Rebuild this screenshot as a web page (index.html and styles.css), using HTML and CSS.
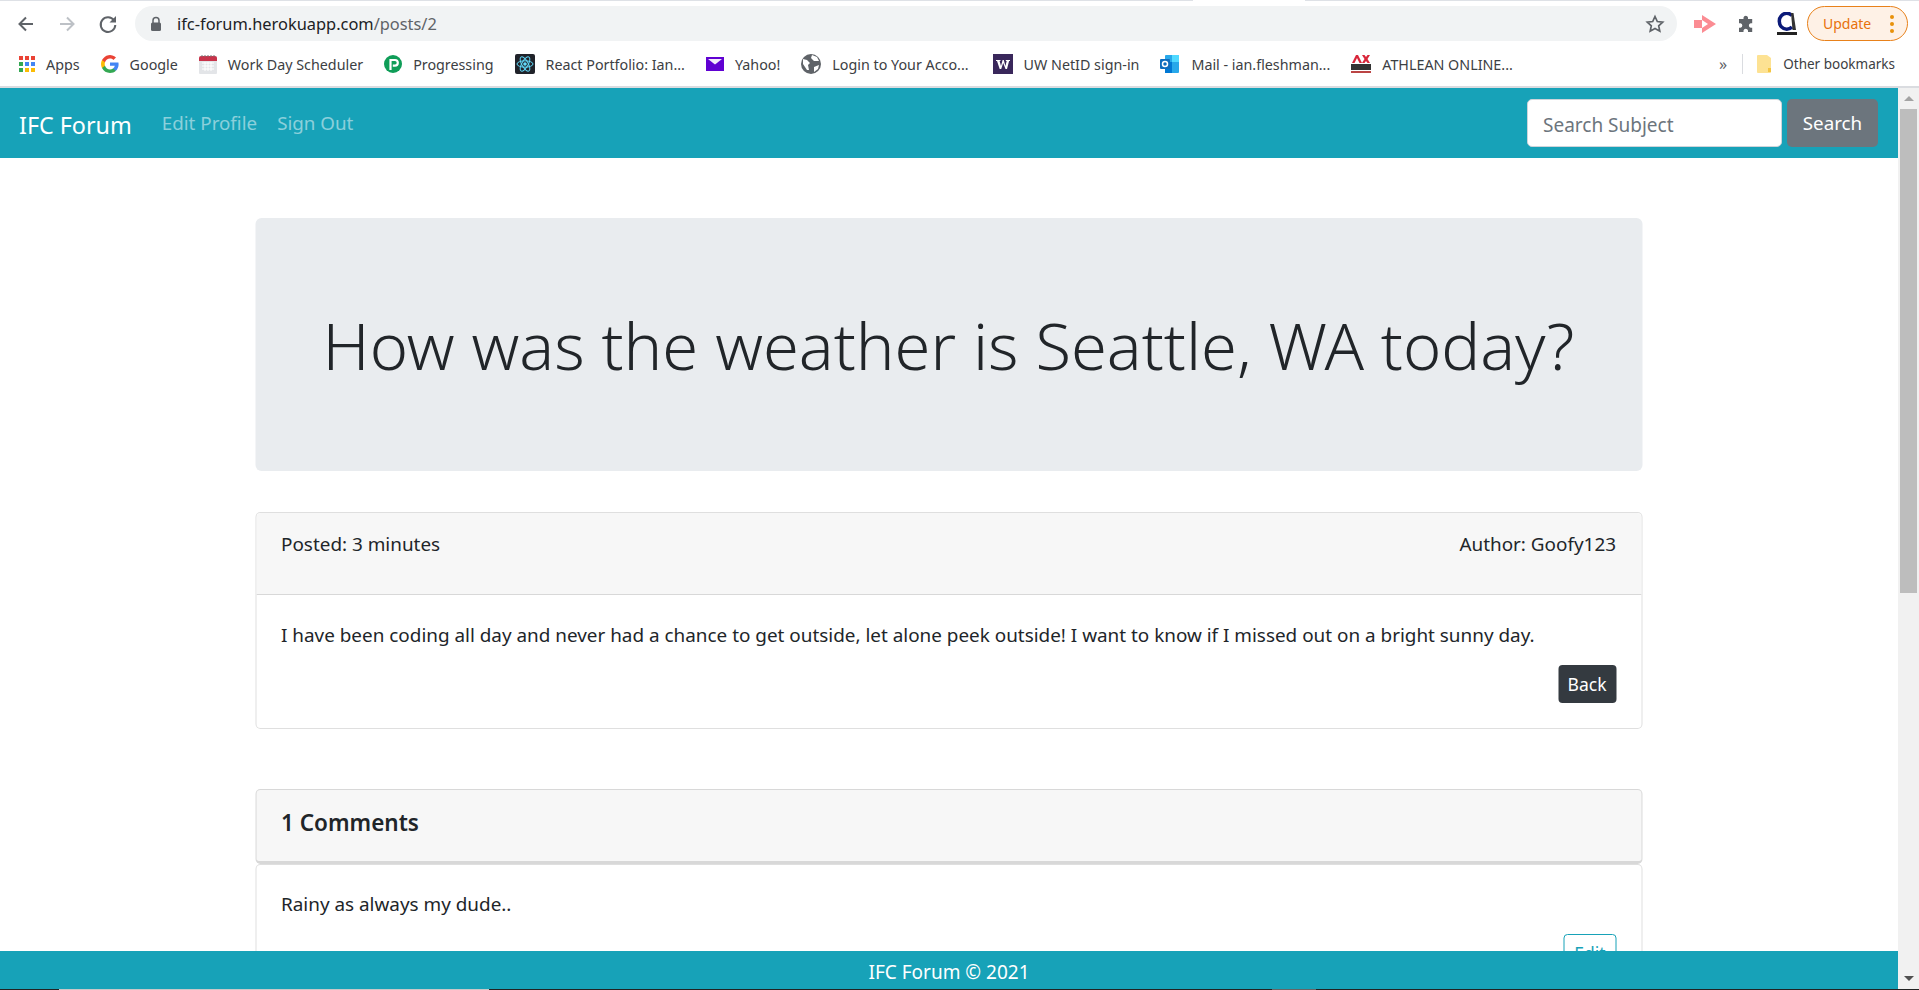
FILE: index.html
```html
<!DOCTYPE html>
<html lang="en">
<head>
  <meta charset="UTF-8">
  <title>IFC Forum</title>
  <link rel="stylesheet" href="styles.css">
</head>
<body>

  <!-- browser chrome -->
  <div class="top-strip"></div>
  <div class="toolbar">
    <span class="tool-btn">
      <svg viewBox="0 0 20 20" width="20" height="20"><path d="M17 10H4M10 3.500 3.500 10l6.500 6.500" fill="none" stroke="#5f6368" stroke-width="2"/></svg>
    </span>
    <span class="tool-btn">
      <svg viewBox="0 0 20 20" width="20" height="20"><path d="M3 10h13M10 3.500 16.500 10 10 16.500" fill="none" stroke="#bdc1c6" stroke-width="2"/></svg>
    </span>
    <span class="tool-btn">
      <svg viewBox="0 0 20 20" width="20" height="20"><path d="M16 6.500A7.300 7.300 0 1 0 17.300 11" fill="none" stroke="#5f6368" stroke-width="2"/><path d="M18 2v6.500h-6.500z" fill="#5f6368"/></svg>
    </span>
    <div class="omnibox">
      <svg class="lock" viewBox="0 0 12 16" width="12" height="16"><path d="M3 7V4.500a3 3 0 0 1 6 0V7" fill="none" stroke="#5f6368" stroke-width="1.500"/><rect x="1" y="6.500" width="10" height="8.500" rx="1.500" fill="#5f6368"/></svg>
      <span class="url">ifc-forum.herokuapp.com<span class="url-path">/posts/2</span></span>
      <svg class="star" viewBox="0 0 20 20" width="20" height="20"><path d="M10 2.500l2.300 5 5.400.6-4 3.700 1.100 5.400-4.800-2.700-4.800 2.700 1.100-5.400-4-3.700 5.400-.6z" fill="none" stroke="#5f6368" stroke-width="1.700"/></svg>
    </div>
    <span class="tool-btn">
      <svg viewBox="0 0 24 20" width="24" height="20"><rect x="1" y="6" width="8" height="8" fill="#fb8c93"/><path d="M9 1l14 9-14 9v-5l6-4-6-4z" fill="#fb8c93"/></svg>
    </span>
    <span class="tool-btn">
      <svg viewBox="0 0 20 20" width="20" height="20"><path d="M7.500 3.500a2.300 2.300 0 0 1 4.500 0V5h4.200v4.200h-1.500a2.300 2.300 0 0 0 0 4.500h1.500V18H12v-1.500a2.300 2.300 0 0 0-4.500 0V18H3v-4.300h1.500a2.300 2.300 0 0 0 0-4.500H3V5h4.500z" fill="#5f6368"/></svg>
    </span>
    <span class="tool-btn">
      <svg viewBox="0 0 22 24" width="22" height="24"><path d="M16 3.500A7.500 8 0 1 0 16 15" fill="none" stroke="#0b1a78" stroke-width="3.500"/><path d="M15 1h2.500l2.500 17h-3.500z" fill="#333"/><rect x="1" y="20" width="20" height="3" fill="#222"/></svg>
    </span>
    <div class="update-btn">
      <span>Update</span>
      <span class="update-dots"><i></i><i></i><i></i></span>
    </div>
  </div>

  <div class="bookmarks">
    <a class="bookmark">
      <svg viewBox="0 0 16 16" width="16" height="16">
        <rect width="4" height="4" fill="#ea4335"/><rect x="6" width="4" height="4" fill="#ea4335"/><rect x="12" width="4" height="4" fill="#ea4335"/>
        <rect y="6" width="4" height="4" fill="#34a853"/><rect x="6" y="6" width="4" height="4" fill="#4285f4"/><rect x="12" y="6" width="4" height="4" fill="#4285f4"/>
        <rect y="12" width="4" height="4" fill="#34a853"/><rect x="6" y="12" width="4" height="4" fill="#fbbc05"/><rect x="12" y="12" width="4" height="4" fill="#fbbc05"/>
      </svg>
      Apps
    </a>
    <a class="bookmark">
      <svg viewBox="0 0 18 18" width="18" height="18">
        <path d="M17.600 9.200c0-.6-.1-1.200-.2-1.800H9v3.400h4.800a4.100 4.100 0 0 1-1.800 2.700v2.200h2.900c1.700-1.600 2.700-3.900 2.700-6.500z" fill="#4285f4"/>
        <path d="M9 18c2.400 0 4.500-.8 5.900-2.200L12 13.600c-.8.500-1.800.9-3 .9-2.300 0-4.300-1.600-5-3.700H1v2.300A9 9 0 0 0 9 18z" fill="#34a853"/>
        <path d="M4 10.700a5.300 5.300 0 0 1 0-3.400V5H1a9 9 0 0 0 0 8z" fill="#fbbc05"/>
        <path d="M9 3.600c1.300 0 2.500.4 3.400 1.300L15 2.400A9 9 0 0 0 1 5l3 2.300c.7-2.100 2.700-3.700 5-3.700z" fill="#ea4335"/>
      </svg>
      Google
    </a>
    <a class="bookmark">
      <svg viewBox="0 0 18 20" width="18" height="20">
        <rect y="3" width="18" height="17" rx="1" fill="#e3e5e8"/>
        <path d="M0 4a2 2 0 0 1 2-2h14a2 2 0 0 1 2 2v3H0z" fill="#c8334a"/>
        <path d="M3 1v2M6 1v2M9 1v2M12 1v2M15 1v2" stroke="#777" stroke-width="1"/>
        <path d="M3 9h12M3 12h12M3 15h12M6 8v9M9 8v9M12 8v9" stroke="#fff" stroke-width="1"/>
      </svg>
      Work Day Scheduler
    </a>
    <a class="bookmark">
      <svg viewBox="0 0 18 18" width="18" height="18"><circle cx="9" cy="9" r="9" fill="#0f9d58"/><path d="M6.500 15V5h4.500a2.800 2.800 0 0 1 0 5.600H8.800" fill="none" stroke="#fff" stroke-width="2.200"/></svg>
      Progressing
    </a>
    <a class="bookmark">
      <svg viewBox="0 0 20 20" width="20" height="20">
        <rect width="20" height="20" rx="2" fill="#20232a"/>
        <circle cx="10" cy="10" r="1.800" fill="#61dafb"/>
        <g fill="none" stroke="#61dafb" stroke-width="1">
          <ellipse cx="10" cy="10" rx="8" ry="3.200"/>
          <ellipse cx="10" cy="10" rx="8" ry="3.200" transform="rotate(60 10 10)"/>
          <ellipse cx="10" cy="10" rx="8" ry="3.200" transform="rotate(120 10 10)"/>
        </g>
      </svg>
      React Portfolio: Ian...
    </a>
    <a class="bookmark">
      <svg viewBox="0 0 18 16" width="18" height="16"><rect y="1" width="18" height="14" fill="#6001d2"/><path d="M2 3h14L9 8.500z" fill="#f3ecfb"/></svg>
      Yahoo!
    </a>
    <a class="bookmark">
      <svg viewBox="0 0 20 20" width="20" height="20"><circle cx="10" cy="10" r="10" fill="#5f6368"/><path d="M2 5l4 1 3 3-2 2 1 5-2 0-4-6zM11 1l5 2 2 4-5 0-3-3zM18 11l-1 4-4 3 0-5z" fill="#fff"/></svg>
      Login to Your Acco...
    </a>
    <a class="bookmark bookmark-uw">
      <svg viewBox="0 0 20 20" width="20" height="20"><rect width="20" height="20" fill="#39275b"/><path d="M3 6h4.500v1H6.600l1.400 5 1.600-6h1.200l1.600 6 1.300-5h-.9V6H17v1h-.9L14 15h-1.500L10.200 9 8.200 15H6.700L4 7H3z" fill="#fff"/></svg>
      UW NetID sign-in
    </a>
    <a class="bookmark">
      <svg viewBox="0 0 20 20" width="20" height="20"><rect x="5" y="1" width="14" height="18" rx="1" fill="#28a8ea"/><rect x="12" y="1" width="7" height="7" fill="#50d9ff"/><rect x="5" y="8" width="7" height="11" fill="#0078d4"/><rect y="5" width="10" height="10" rx="1" fill="#0f6cbd"/><circle cx="5" cy="10" r="2.500" fill="none" stroke="#fff" stroke-width="1.500"/></svg>
      Mail - ian.fleshman...
    </a>
    <a class="bookmark">
      <svg viewBox="0 0 20 20" width="20" height="20"><path d="M1 9l4-8h2l4 8H8.500L6 4 3.500 9zM11 1h2.500l1.500 2 1.500-2H19l-2.500 4L19 9h-2.500L15 7l-1.500 2H11l2.500-4z" fill="#d9263a"/><rect y="10" width="20" height="6" fill="#333"/><rect y="17" width="20" height="2" fill="#b44"/></svg>
      ATHLEAN ONLINE...
    </a>
    <div class="bookmarks-right">
      <span class="more">»</span>
      <span class="divider"></span>
      <a class="bookmark bookmark-other">
        <svg viewBox="0 0 16 20" width="16" height="20"><path d="M1 2a1 1 0 0 1 1-1h9l4 3v14a1 1 0 0 1-1 1H2a1 1 0 0 1-1-1z" fill="#fde293"/><rect x="12" y="14" width="3" height="4" fill="#f4c542"/></svg>
        Other bookmarks
      </a>
    </div>
  </div>

  <div class="viewport">
    <div class="page">
      <nav class="navbar">
        <a class="brand">IFC Forum</a>
        <a class="nav-link">Edit Profile</a>
        <a class="nav-link">Sign Out</a>
        <form class="search">
          <input class="search-input" type="text" placeholder="Search Subject">
          <button class="search-btn" type="button">Search</button>
        </form>
      </nav>

      <main class="content">
        <div class="jumbotron">
          <h1>How was the weather is Seattle, WA today?</h1>
        </div>

        <div class="card">
          <div class="card-header post-meta">
            <p>Posted: 3 minutes</p>
            <p>Author: Goofy123</p>
          </div>
          <div class="card-body">
            <p>I have been coding all day and never had a chance to get outside, let alone peek outside! I want to know if I missed out on a bright sunny day.</p>
            <div class="actions">
              <a class="btn btn-dark">Back</a>
            </div>
          </div>
        </div>

        <div class="card comments-head">
          <h4>1 Comments</h4>
        </div>
        <div class="card comment">
          <div class="card-body">
            <p>Rainy as always my dude..</p>
            <div class="actions">
              <a class="btn btn-outline">Edit</a>
            </div>
          </div>
        </div>
      </main>

      <footer class="footer">IFC Forum © 2021</footer>
    </div>

    <div class="scrollbar">
      <span class="arrow-up"></span>
      <span class="thumb"></span>
      <span class="arrow-down"></span>
    </div>
  </div>
  <div class="bottom-strip"></div>

</body>
</html>
```

FILE: styles.css
```css
* {
  box-sizing: border-box;
}

html, body {
  height: 100%;
}

body {
  font-family: "Noto Sans", Arial, sans-serif;
  margin: 0;
  padding: 0;
  background-color: #fff;
  color: #212529;
  display: flex;
  flex-direction: column;
  overflow: hidden;
}

/* browser chrome */
.top-strip {
  height: 1px;
  flex-shrink: 0;
  background: linear-gradient(to right, #dee1e6 1193px, #fff 1193px, #fff 1305px, #dee1e6 1305px);
}

.toolbar {
  display: flex;
  align-items: center;
  flex-shrink: 0;
  height: 43px;
  padding: 5px 11px 3px 5px;
  background-color: #fff;
}

.tool-btn {
  width: 41px;
  height: 35px;
  display: flex;
  align-items: center;
  justify-content: center;
  flex-shrink: 0;
}

.omnibox {
  flex: 1;
  height: 35px;
  margin: 0 7px;
  padding: 0 12px 0 15px;
  display: flex;
  align-items: center;
  background-color: #f1f3f4;
  border-radius: 18px;
}

.url {
  margin-left: 15px;
  font-size: 16.400px;
  color: #202124;
}

.url-path {
  color: #5f6368;
}

.star {
  margin-left: auto;
}

.update-btn {
  width: 101px;
  height: 35px;
  flex-shrink: 0;
  display: flex;
  align-items: center;
  justify-content: space-between;
  padding: 0 13px 0 15px;
  font-size: 14px;
  color: #e8710a;
  background-color: #fef1e6;
  border: 1.5px solid #e8811a;
  border-radius: 18px;
}

.update-dots {
  display: flex;
  flex-direction: column;
  gap: 3px;
}

.update-dots i {
  width: 4px;
  height: 4px;
  border-radius: 50%;
  background-color: #e8910a;
}

.bookmarks {
  display: flex;
  align-items: center;
  flex-shrink: 0;
  height: 44px;
  padding: 0 24px 2px 19px;
  gap: 21px;
  background-color: #fff;
  border-bottom: 2px solid #dadce0;
}

.bookmark {
  display: flex;
  align-items: center;
  gap: 11px;
  font-size: 14.300px;
  color: #3c4043;
  white-space: nowrap;
}

.bookmark-uw {
  margin-left: 3px;
}

.bookmark-other {
  font-size: 13.500px;
}

.bookmarks-right {
  margin-left: auto;
  display: flex;
  align-items: center;
}

.more {
  font-size: 16px;
  color: #5f6368;
}

.divider {
  width: 1px;
  height: 20px;
  margin: 0 13px 0 15px;
  background-color: #dadce0;
}

/* page in the window */
.viewport {
  flex: 1;
  display: flex;
  min-height: 0;
}

.page {
  flex: 1;
  position: relative;
  overflow: hidden;
}

.navbar {
  height: 70px;
  display: flex;
  align-items: center;
  padding: 0 20px 0 19px;
  background-color: #17a2b8;
}

.brand {
  padding-top: 3px;
  font-size: 23.300px;
  color: #fff;
  margin-right: 30px;
}

.nav-link {
  font-size: 18.800px;
  color: rgba(255, 255, 255, 0.5);
  margin-right: 20px;
}

.search {
  margin-left: auto;
  display: flex;
  gap: 5px;
}

.search-input {
  width: 255px;
  height: 48px;
  padding: 3px 15px 0;
  font-family: inherit;
  font-size: 19px;
  color: #495057;
  border: 1px solid #ced4da;
  border-radius: 5px;
}

.search-input::placeholder {
  color: #6c757d;
}

.search-btn {
  width: 91px;
  height: 48px;
  font-family: inherit;
  font-size: 18.800px;
  color: #fff;
  background-color: #6c757d;
  border: none;
  border-radius: 5px;
}

.content {
  width: 1387px;
  margin: 0 auto;
  padding-top: 60px;
  transform: translateX(-0.500px);
}

.jumbotron {
  height: 253px;
  margin-bottom: 41px;
  display: flex;
  align-items: center;
  justify-content: center;
  background-color: #e9ecef;
  border-radius: 6px;
}

h1 {
  margin: 0;
  font-size: 65px;
  font-weight: 300;
  white-space: nowrap;
}

.card {
  background-color: #fff;
  border: 1px solid rgba(0, 0, 0, 0.125);
  border-radius: 5px;
  font-size: 18.900px;
  line-height: 30px;
}

.card p {
  margin: 0;
}

.card-header {
  background-color: #f7f7f7;
  border-bottom: 1px solid rgba(0, 0, 0, 0.125);
  border-radius: 5px 5px 0 0;
}

.post-meta {
  height: 82px;
  padding: 16px 25px 0;
  display: flex;
  justify-content: space-between;
}

.card-body {
  padding: 25px 25px 25px;
}

.actions {
  display: flex;
  justify-content: flex-end;
  margin-top: 15px;
}

.btn {
  height: 38px;
  display: flex;
  align-items: center;
  padding: 0 9.500px;
  font-size: 17.500px;
  border-radius: 4px;
}

.btn-dark {
  color: #fff;
  background-color: #343a40;
}

.btn-outline {
  color: #17a2b8;
  border: 1px solid #17a2b8;
}

.comments-head {
  height: 75px;
  margin-top: 60px;
  padding: 0 25px 6px;
  display: flex;
  align-items: center;
  background-color: #f7f7f7;
  border-bottom-width: 3px;
}

h4 {
  margin: 0;
  font-size: 22.500px;
  font-weight: 600;
}

.comment {
  height: 130px;
}

.comment .card-body {
  padding-top: 24px;
}

.footer {
  position: absolute;
  left: 0;
  right: 0;
  bottom: 0;
  height: 38px;
  padding-top: 3px;
  display: flex;
  align-items: center;
  justify-content: center;
  font-size: 19px;
  color: #fff;
  background-color: #17a2b8;
}

.scrollbar {
  width: 21px;
  flex-shrink: 0;
  display: flex;
  flex-direction: column;
  align-items: center;
  background-color: #f1f1f1;
}

.thumb {
  width: 17px;
  height: 484px;
  margin-top: 8px;
  background-color: #bdbdbd;
}

.arrow-up {
  margin-top: 8px;
  border: 5px solid transparent;
  border-top: 0;
  border-bottom: 5px solid #a3a3a3;
}

.arrow-down {
  margin-top: auto;
  margin-bottom: 8px;
  border: 5px solid transparent;
  border-bottom: 0;
  border-top: 5px solid #505050;
}

.bottom-strip {
  height: 1px;
  flex-shrink: 0;
  background: linear-gradient(to right, #222 59px, #c8c8c8 59px, #c8c8c8 489px, #222 489px, #222 1272px, #666 1272px, #666 1316px, #222 1316px);
}
```
